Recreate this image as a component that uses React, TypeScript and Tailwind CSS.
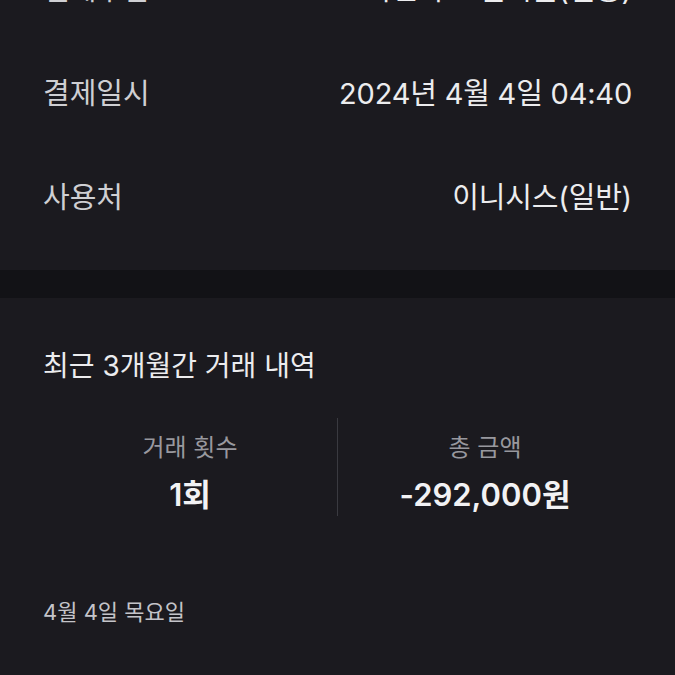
const font = { fontFamily: 'Inter, "Noto Sans CJK KR", "Noto Sans", sans-serif' };

type Row = { label: string; value: string };

const rows: Row[] = [
  { label: "결제수단", value: "KB국민카드 일시불(신용)" },
  { label: "결제일시", value: "2024년 4월 4일 04:40" },
  { label: "사용처", value: "이니시스(일반)" },
];

function InfoRow({ label, value }: Row) {
  return (
    <div className="flex items-center justify-between h-[104px] px-[43px]">
      <span className="text-[29px] leading-[40px] text-[#cfcfd3]">{label}</span>
      <span className="text-[29px] leading-[40px] text-[#ececee] tracking-[-0.2px]">{value}</span>
    </div>
  );
}

export default function App() {
  return (
    <div className="w-[675px] h-[675px] overflow-hidden bg-[#1b1a1f]" style={font}>
      {/* payment detail rows, first one scrolled out of view */}
      <div className="-mt-[62px] pb-[20px]">
        {rows.map((r) => (
          <InfoRow key={r.label} {...r} />
        ))}
      </div>

      <div className="h-[28px] bg-[#121216]" />

      {/* recent history */}
      <div className="pt-[49px] px-[43px]">
        <h2 className="text-[28px] font-normal text-[#ececee] leading-[38px]">
          최근 3개월간 거래 내역
        </h2>

        <div className="mt-[33px] flex items-stretch">
          <div className="flex-1 flex flex-col items-center pt-[14px]">
            <span className="text-[24px] text-[#98989e] leading-[32px]">거래 횟수</span>
            <span className="mt-[12px] text-[31px] font-semibold text-[#f2f2f4] leading-[38px]">1회</span>
          </div>
          <div className="w-px h-[98px] bg-[#3a3a40]" />
          <div className="flex-1 flex flex-col items-center pt-[14px]">
            <span className="text-[24px] text-[#98989e] leading-[32px]">총 금액</span>
            <span className="mt-[12px] text-[31px] font-semibold text-[#f2f2f4] leading-[38px]">-292,000원</span>
          </div>
        </div>

        <div className="mt-[81px] text-[22px] text-[#c4c4c9] leading-[30px]">
          4월 4일 목요일
        </div>
      </div>
    </div>
  );
}
